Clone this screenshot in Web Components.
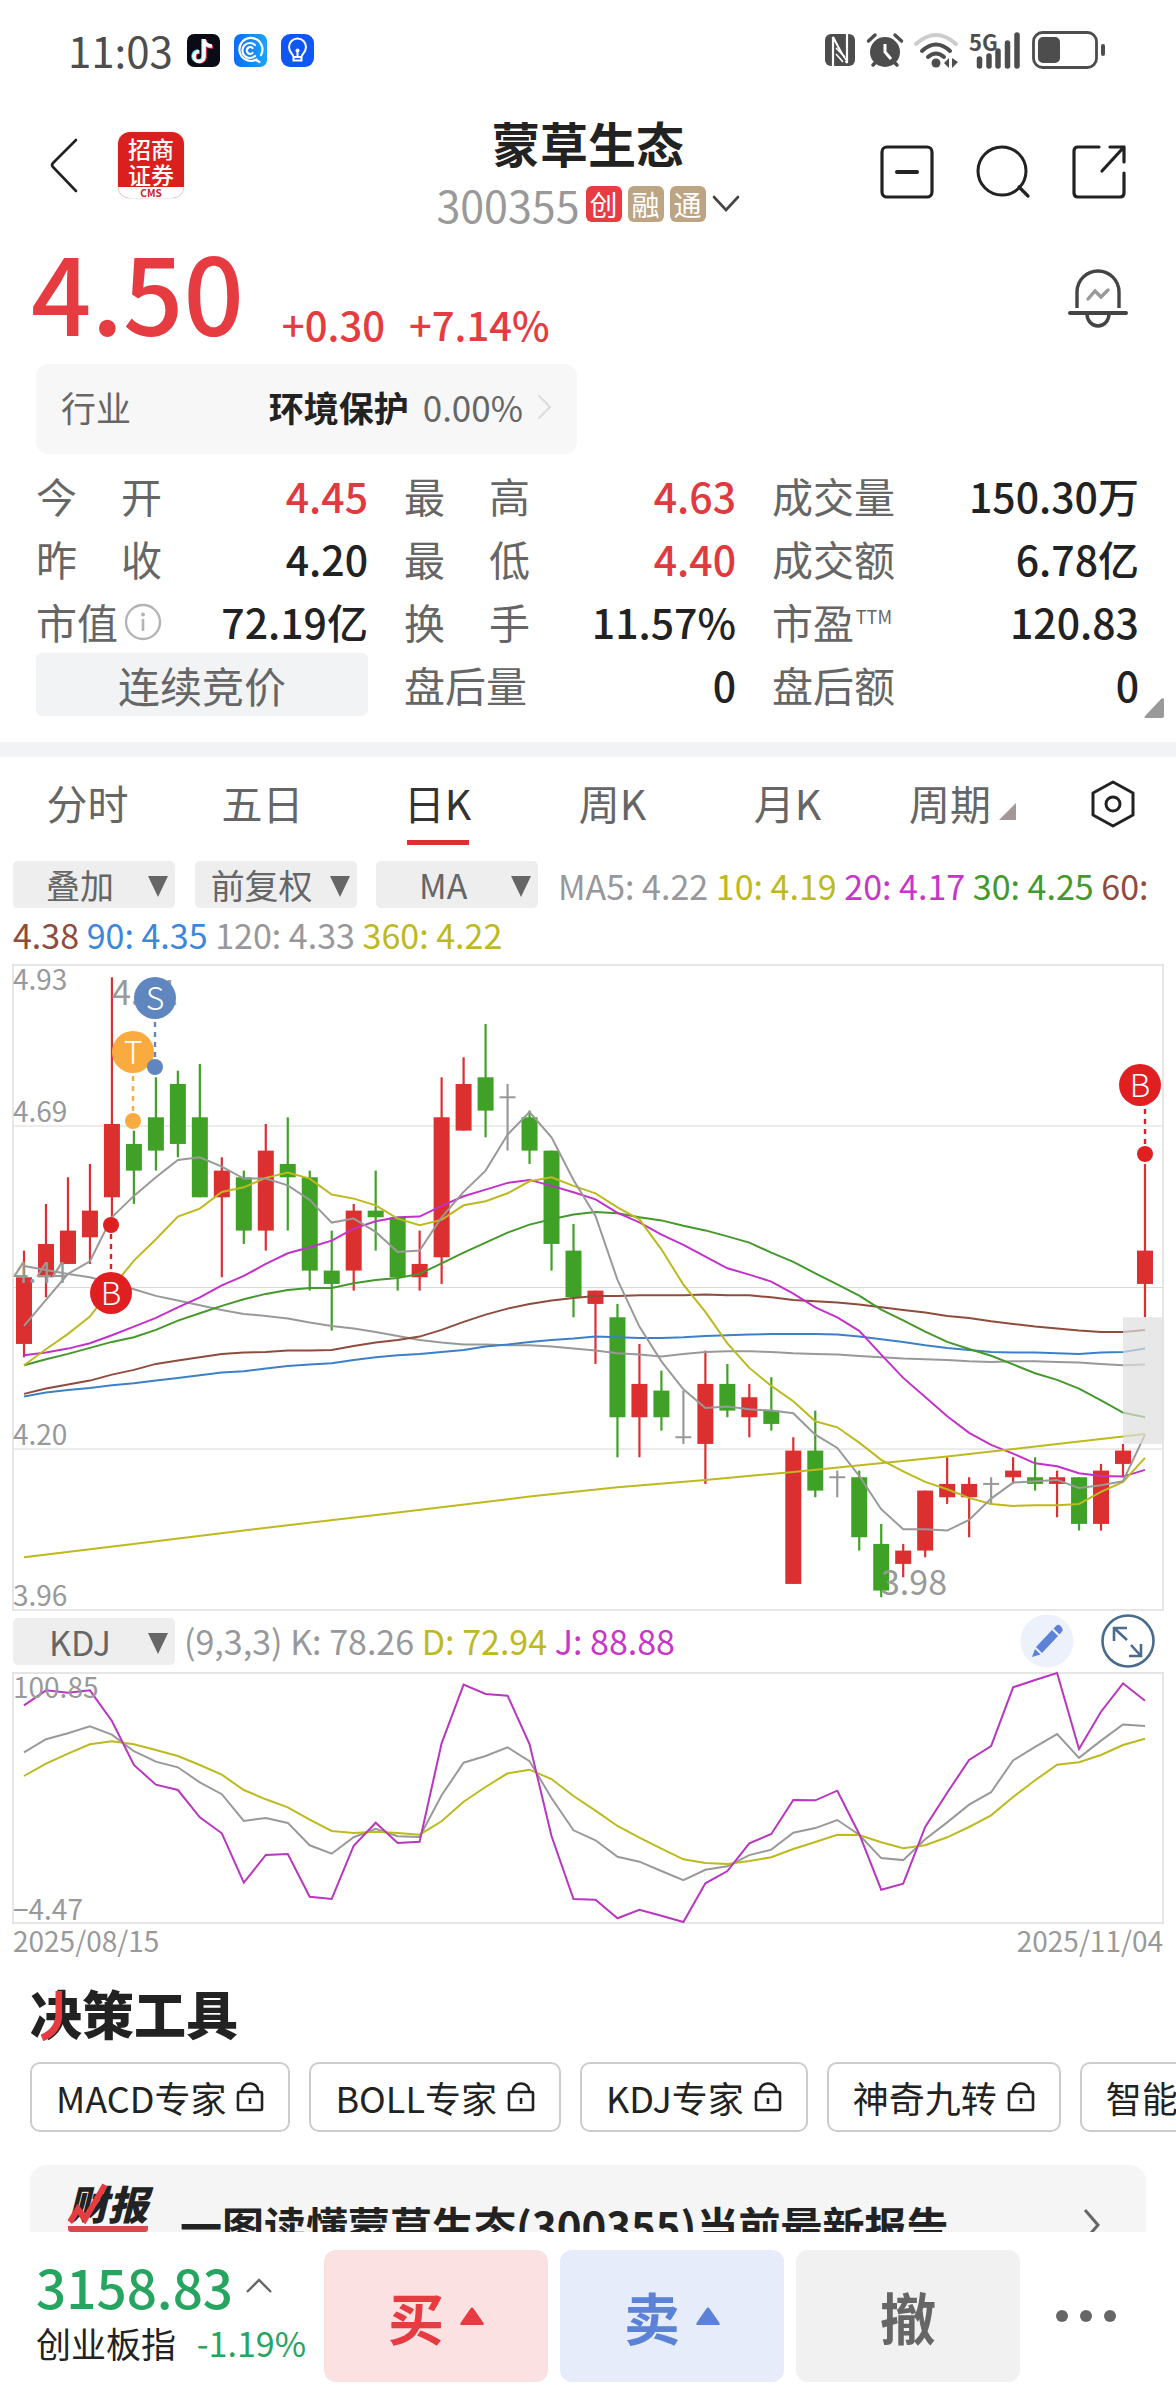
<!DOCTYPE html>
<html lang="zh-CN">
<head>
<meta charset="utf-8">
<meta name="viewport" content="width=device-width, initial-scale=1">
<title>蒙草生态 300355</title>
<style>
  html, body { margin: 0; height: 100%; background: #fff; }
  body { font-family: "Noto Sans CJK SC", "Noto Sans", sans-serif; color: #222; }
</style>
</head>
<body>
<stock-app></stock-app>
<script>
const define = (name, css, html, ready) => {
  const tpl = document.createElement('template');
  tpl.innerHTML = `<style>*{box-sizing:border-box}button,select{font:inherit;color:inherit;border:0;background:none;padding:0;margin:0}${css}</style>${html}`;
  customElements.define(name, class extends HTMLElement {
    constructor() {
      super();
      this.attachShadow({ mode: 'open' }).append(tpl.content.cloneNode(true));
    }
    connectedCallback() { if (ready) ready.call(this, this.shadowRoot); }
  });
};

/* name: [width, height, markup] */
const ICONS = {
  tiktok: [33, 33, `<rect width="33" height="33" rx="7" fill="#0b0b16"/><g fill="none" stroke-width="3.6"><path d="M16 5v17a5 5 0 1 1-5-5M16 6c1 4 4 6 8 6" stroke="#25e8e4"/><path d="M18 6v17a5 5 0 1 1-5-5M18 7c1 4 4 6 8 6" stroke="#f5345a"/><path d="M17 5v17.500a5 5 0 1 1-5-5M17 6c1 4 4 6 8 6" stroke="#fff"/></g>`],
  spiral: [33, 33, `<defs><linearGradient id="g"><stop stop-color="#0b6cf8"/><stop offset="1" stop-color="#1ba4fb"/></linearGradient></defs><rect width="33" height="33" rx="7" fill="url(#g)"/><g fill="none" stroke="#fff" stroke-width="2.200" stroke-linecap="round"><path d="M22.500 25.500A11.500 11.500 0 1 1 27 21M22 26l3.500 2"/><path d="M21 22a7.500 7.500 0 1 1 0-11"/><path d="M18.500 19a3.400 3.400 0 1 1 0-5"/></g>`],
  bulb: [33, 33, `<rect width="33" height="33" rx="9" fill="#0e57f5"/><g fill="none" stroke="#fff" stroke-width="2"><path d="M12.500 23c0-3-4.500-4.500-4.500-10a8.500 8.500 0 0 1 17 0c0 5.500-4.500 7-4.500 10zM12.500 23v3.500h8V23M16.500 23v-5"/></g><circle cx="16.500" cy="16.500" r="2" fill="#fff"/>`],
  nfc: [32, 32, `<rect x="1" width="30" height="32" rx="6" fill="#4d4d4d"/><path d="M9 32V3l14 26V0" fill="none" stroke="#fff" stroke-width="2.200"/><path d="M12.500 27V14L22 27zM12 6l8 3v12z" fill="#4d4d4d"/><path d="M12 14l9 9M12 20l7 8" stroke="#fff" stroke-width="1.600"/>`],
  alarm: [36, 34, `<circle cx="18" cy="19" r="15" fill="#4d4d4d"/><path d="M1.500 8L8 2M34.500 8L28 2M6 32l5-5M30 32l-5-5" stroke="#4d4d4d" stroke-width="3.500" stroke-linecap="round"/><path d="M18 11v8l6 7" fill="none" stroke="#fff" stroke-width="3"/>`],
  wifi: [44, 35, `<g fill="none" stroke-linecap="round" stroke-width="4"><path d="M2 11Q22-7 42 11" stroke="#ccc"/><path d="M8 18q14-13 28 0M14 24q8-7 16 0" stroke="#4d4d4d"/></g><circle cx="22" cy="30" r="4.500" fill="#4d4d4d"/><path d="M35 25v10l-5-5zM38 25v10l6-6z" fill="#4d4d4d"/>`],
  signal: [52, 35, `<path d="M10.500 26v7M20 23v10M29 18v15M38.500 10v23M48 2v31" stroke="#4d4d4d" stroke-width="5.500" stroke-linecap="round"/><text x="0" y="18" font-size="22" font-weight="700" font-family="Noto Sans CJK SC" fill="#4d4d4d">5G</text>`],
  battery: [74, 38, `<rect x="1.500" y="1.500" width="63" height="35" rx="9" fill="none" stroke="#4d4d4d" stroke-width="2.800"/><rect x="6" y="6" width="22" height="26" rx="5" fill="#4d4d4d"/><path d="M71 15v8" stroke="#4d4d4d" stroke-width="4" stroke-linecap="round"/>`],
  back: [28, 56, `<path d="M26 3L3 26q-2 2 0 4l23 24" fill="none" stroke="#222" stroke-width="2.600" stroke-linecap="round"/>`],
  minus: [54, 54, `<rect x="2" y="2" width="50" height="50" rx="5" fill="none" stroke="#222" stroke-width="3.200"/><path d="M17 27h20" stroke="#222" stroke-width="4" stroke-linecap="round"/>`],
  search: [54, 54, `<circle cx="26" cy="26" r="24" fill="none" stroke="#222" stroke-width="3"/><path d="M43 42l9 9" stroke="#222" stroke-width="3.200" stroke-linecap="round"/>`],
  share: [54, 54, `<path d="M27 2H6q-4 0-4 4v42q0 4 4 4h42q4 0 4-4V28M38 2h14v15M52 2L30 26" fill="none" stroke="#222" stroke-width="3.200" stroke-linecap="round" stroke-linejoin="round"/>`],
  bell: [60, 62, `<path d="M9 41V25a21 21 0 0 1 42 0v16M19 47a11 12 0 0 0 22 0" fill="none" stroke="#444" stroke-width="3.400"/><path d="M2 46h56" stroke="#444" stroke-width="4" stroke-linecap="round"/><path d="M20 32l7-8 6 6 7-7" fill="none" stroke="#999" stroke-width="3.400" stroke-linecap="round"/>`],
  down: [28, 18, `<path d="M2 2l12 13L26 2" fill="none" stroke="#444" stroke-width="2.600" stroke-linecap="round"/>`],
  right: [16, 26, `<path d="M2 2l11 11L2 24" fill="none" stroke="#ddd" stroke-width="2.200" stroke-linecap="round"/>`],
  next: [20, 36, `<path d="M3 3l13 15L3 33" fill="none" stroke="#666" stroke-width="3"/>`],
  up: [28, 18, `<path d="M2 15L14 3l12 12" fill="none" stroke="#666" stroke-width="2.400"/>`],
  info: [38, 38, `<circle cx="19" cy="19" r="17" fill="none" stroke="#b4b4b4" stroke-width="2.400"/><circle cx="19" cy="11.500" r="2" fill="#b4b4b4"/><path d="M19 16v12" stroke="#b4b4b4" stroke-width="2.600"/>`],
  corner: [20, 20, `<path d="M20 1v17q0 2-2 2H1q-1-1 0-2L18 0z" fill="#999"/>`],
  tabcorner: [17, 17, `<path d="M17 0v17H0z" fill="#a39797"/>`],
  hex: [46, 48, `<path d="M23 2l20 11v22L23 46 3 35V13z" fill="none" stroke="#222" stroke-width="3" stroke-linejoin="round"/><circle cx="23" cy="24" r="7" fill="none" stroke="#222" stroke-width="3"/>`],
  pencil: [54, 54, `<circle cx="27" cy="27" r="26.500" fill="#ecf1fb"/><g fill="#5b82d6"><path d="M32 16l6 6-16 17-6-6z"/><path d="M33.500 14.500l3-3q2-1.500 4 .5l1.500 2q1.500 2 0 3.500l-2.500 3z"/><path d="M15 35l5.500 5.500L12 43z"/></g>`],
  expand: [54, 54, `<g fill="none" stroke="#4a6b8c" stroke-width="2.600"><circle cx="27" cy="27" r="25.500"/><path d="M26 14H13v13M13 14l13 12M40 30v12H28M40 42L30 31"/></g>`],
  lock: [28, 30, `<rect x="2" y="10" width="24" height="18" rx="1" fill="none" stroke="#222" stroke-width="2.600"/><path d="M6 10V8a8 6.500 0 0 1 16 0v2M14 16v6" fill="none" stroke="#222" stroke-width="2.600"/>`],
  tri: [24, 18, `<path d="M10.500 1.500q1.500-2 3 0L23.500 16q1 2-1.500 2H2q-2.500 0-1.500-2z" fill="currentColor"/>`],
  more: [62, 14, `<g fill="#666"><circle cx="7" cy="7" r="6"/><circle cx="31" cy="7" r="6"/><circle cx="55" cy="7" r="6"/></g>`]
};

define('ui-icon', `:host{display:inline-flex;flex:none}svg{display:block;overflow:visible}`, ``, function (root) {
  const [w, h, body] = ICONS[this.getAttribute('name')];
  const box = document.createElement('div');
  box.innerHTML = `<svg width="${w}" height="${h}" viewBox="0 0 ${w} ${h}" aria-hidden="true">${body}</svg>`;
  root.append(box.firstChild);
});

define('status-bar', `
  :host{display:flex;justify-content:space-between;align-items:center;padding:20px 70px 20px 68px;color:#4d4d4d;font-size:42px;line-height:60px}
  div{display:flex;align-items:center;gap:14px}
  .sys{gap:11px}`,
  `<div class="apps"><time>11:03</time><ui-icon name="tiktok"></ui-icon><ui-icon name="spiral"></ui-icon><ui-icon name="bulb"></ui-icon></div>
   <div class="sys"><ui-icon name="nfc"></ui-icon><ui-icon name="alarm"></ui-icon><ui-icon name="wifi"></ui-icon><ui-icon name="signal"></ui-icon><ui-icon name="battery"></ui-icon></div>`);

define('broker-logo', `
  :host{display:block;width:66px;border-radius:12px;overflow:hidden;background:#d9201f;color:#fff;text-align:center;box-shadow:0 0 0 1px #eee;padding-top:3px;font:500 23px/26px "Noto Sans CJK SC",sans-serif}
  span{display:block}
  small{display:block;background:#fff;color:#c22;font-size:10px;line-height:11px;font-weight:700}`,
  `<span>招商</span><span>证券</span><small>CMS</small>`);

define('stock-header', `
  :host{display:grid;grid-template-columns:1fr auto 1fr;align-items:center;padding:12px 50px 0 50px}
  .left,.right,.code,button{display:flex;align-items:center}
  .left{gap:40px;padding-bottom:8px}
  .right{gap:42px;justify-content:flex-end;padding-top:6px}
  .mid{text-align:center}
  h1{margin:0;font-size:48px;line-height:60px;font-weight:700}
  .code{margin-top:10px;font-size:43px;line-height:44px;color:#999;gap:6px;justify-content:center}
  b{width:36px;border-radius:6px;background:#bda583;color:#fff;font-size:28px;line-height:36px;font-weight:400}
  b.hot{background:#e63c42}`,
  `<div class="left"><button aria-label="返回"><ui-icon name="back"></ui-icon></button><broker-logo></broker-logo></div>
   <div class="mid"><h1>蒙草生态</h1><div class="code"><span>300355</span><b class="hot">创</b><b>融</b><b>通</b><ui-icon name="down"></ui-icon></div></div>
   <div class="right"><button aria-label="删自选"><ui-icon name="minus"></ui-icon></button><button aria-label="搜索"><ui-icon name="search"></ui-icon></button><button aria-label="分享"><ui-icon name="share"></ui-icon></button></div>`);

define('price-line', `
  :host{display:flex;align-items:flex-end;padding:9px 48px 0 31px;color:#e63b40;font-weight:500}
  .now{font-size:106px;line-height:110px}
  .chg{font-size:40px;line-height:42px;display:flex;gap:24px;margin-left:38px;flex:1}
  button{display:flex;align-self:center;padding-top:16px}`,
  `<div class="now">4.50</div><div class="chg"><span>+0.30</span><span>+7.14%</span></div><button aria-label="提醒"><ui-icon name="bell"></ui-icon></button>`);

define('industry-card', `
  :host{display:block;padding:19px 36px 0}
  a{display:flex;align-items:center;width:49%;padding:0 24px 4px 25px;border-radius:12px;background:#f7f7f7;color:#666;font-size:35px;line-height:86px;text-decoration:none}
  strong{color:#222;margin:0 14px 0 auto}
  ui-icon{margin-left:14px}`,
  `<a href="#industry"><span>行业</span><strong>环境保护</strong><span>0.00%</span><ui-icon name="right"></ui-icon></a>`);

define('quote-cell', `
  :host{display:flex;align-items:center;justify-content:space-between;font-size:41px;line-height:63px}
  .k{display:flex;justify-content:space-between;align-items:center;width:126px;color:#666}
  .v{font-weight:500;color:#222}
  :host([up]) .v{color:#e0393e}`,
  `<span class="k"></span><span class="v"><slot></slot></span>`,
  function (root) {
    const k = root.querySelector('.k'), label = this.getAttribute('label');
    const parts = label.length === 2 && !this.hasAttribute('mark') ? [...label] : [label];
    k.replaceChildren(...parts.map(t => Object.assign(document.createElement('span'), { textContent: t })));
    if (this.getAttribute('mark') === 'info') k.insertAdjacentHTML('beforeend', '<ui-icon name="info"></ui-icon>');
    if (this.getAttribute('mark') === 'ttm') k.insertAdjacentHTML('beforeend', '<span style="font-size:18px;line-height:20px;padding:0 6px 12px 0">TTM</span>');
  });

define('quote-grid', `
  :host{display:grid;position:relative;grid-template-columns:332fr 332fr 367fr;column-gap:36px;padding:10px 37px 26px 36px}
  button{border-radius:6px;background:#f2f3f5;color:#666;font-size:42px;line-height:60px}
  .fold{position:absolute;right:12px;bottom:24px}`,
  `<quote-cell label="今开" up>4.45</quote-cell><quote-cell label="最高" up>4.63</quote-cell><quote-cell label="成交量">150.30万</quote-cell>
   <quote-cell label="昨收">4.20</quote-cell><quote-cell label="最低" up>4.40</quote-cell><quote-cell label="成交额">6.78亿</quote-cell>
   <quote-cell label="市值" mark="info">72.19亿</quote-cell><quote-cell label="换手">11.57%</quote-cell><quote-cell label="市盈" mark="ttm">120.83</quote-cell>
   <button>连续竞价</button><quote-cell label="盘后量">0</quote-cell><quote-cell label="盘后额">0</quote-cell>
   <ui-icon class="fold" name="corner"></ui-icon>`);

define('period-tabs', `
  :host{display:grid;grid-template-columns:repeat(6,175fr) 126fr;border-top:15px solid #f2f3f5;padding-bottom:16px;color:#666;font-size:41px;line-height:60px}
  button{display:flex;flex-direction:column;align-items:center;padding-top:15px}
  button::after{content:"";width:62px;height:5px;margin-top:8px}
  .on{color:#333}
  .on::after{background:#dc2f30}
  .more span{display:flex;align-items:center;gap:8px}
  .more ui-icon{padding-top:18px}
  .set{padding-top:23px}
  .set::after{display:none}`,
  `<button>分时</button><button>五日</button><button class="on">日K</button><button>周K</button><button>月K</button>
   <button class="more"><span>周期<ui-icon name="tabcorner"></ui-icon></span></button><button class="set" aria-label="设置"><ui-icon name="hex"></ui-icon></button>`);

define('pick-list', `
  :host{display:inline-block;position:relative;width:162px;color:#666;font-size:34px;vertical-align:top}
  select{display:block;appearance:none;width:100%;height:47px;line-height:47px;padding-right:28px;border-radius:5px;background:#eee;text-align-last:center}
  i{position:absolute;right:7px;top:15px;border:10px solid transparent;border-top:21px solid #666;border-bottom:0;pointer-events:none}`,
  `<select><option></option></select><i></i>`,
  function (root) {
    root.querySelector('option').textContent = this.getAttribute('value');
    root.querySelector('select').setAttribute('aria-label', this.getAttribute('value'));
  });

define('ma-legend', `
  :host{display:block;padding:0 13px 5px;font-size:34px;line-height:49px}
  pick-list{margin-right:12px}`,
  `<pick-list value="叠加"></pick-list> <pick-list value="前复权"></pick-list> <pick-list value="MA"></pick-list> <span style="color:#98989c">MA5: 4.22</span> <span style="color:#bdb91f">10: 4.19</span> <span style="color:#c836c8">20: 4.17</span> <span style="color:#44982c">30: 4.25</span> <span style="color:#8f4c3c">60: 4.38</span> <span style="color:#3c87dc">90: 4.35</span> <span style="color:#98989c">120: 4.33</span> <span style="color:#bdb91f">360: 4.22</span>`);

/* Candles: colour, high, body top, body bottom, low */
const CANDLES = `R 4.50 4.46 4.36 4.34|R 4.57 4.51 4.46 4.43|R 4.61 4.53 4.48 4.48|R 4.63 4.56 4.52 4.48|R 4.91 4.69 4.58 4.54|G 4.68 4.66 4.62 4.57|G 4.76 4.70 4.65 4.62|G 4.77 4.75 4.66 4.64|G 4.78 4.70 4.58 4.58|R 4.64 4.62 4.58 4.46|G 4.62 4.61 4.53 4.51|R 4.69 4.65 4.53 4.50|G 4.70 4.63 4.61 4.53|G 4.62 4.61 4.47 4.44|G 4.53 4.47 4.45 4.38|R 4.57 4.56 4.47 4.44|G 4.62 4.56 4.55 4.50|G 4.55 4.55 4.46 4.44|R 4.53 4.48 4.46 4.44|R 4.76 4.70 4.49 4.45|R 4.79 4.75 4.68 4.68|G 4.84 4.76 4.71 4.67|D 4.75 4.73 4.73 4.65|G 4.71 4.70 4.65 4.63|G 4.65 4.65 4.51 4.47|G 4.54 4.50 4.43 4.40|R 4.44 4.44 4.42 4.33|G 4.42 4.40 4.25 4.19|R 4.36 4.30 4.25 4.19|G 4.32 4.29 4.25 4.23|D 4.29 4.22 4.22 4.21|R 4.35 4.30 4.21 4.15|G 4.33 4.30 4.26 4.25|R 4.30 4.28 4.25 4.22|G 4.31 4.26 4.24 4.23|R 4.22 4.20 4.00 4.00|G 4.26 4.20 4.14 4.13|D 4.17 4.16 4.16 4.13|G 4.17 4.16 4.07 4.05|G 4.09 4.06 3.99 3.98|R 4.06 4.05 4.03 4.01|R 4.14 4.14 4.05 4.04|R 4.19 4.15 4.13 4.12|R 4.16 4.15 4.13 4.07|D 4.16 4.15 4.15 4.12|R 4.19 4.17 4.16 4.15|G 4.19 4.16 4.15 4.14|R 4.17 4.16 4.15 4.10|G 4.16 4.16 4.09 4.08|R 4.18 4.17 4.09 4.08|R 4.21 4.20 4.18 4.16|R 4.63 4.50 4.45 4.40`
  .split('|').map(s => { const [c, ...n] = s.split(' '); return [c, ...n.map(Number)]; });
const CLOSES = CANDLES.map(([c, , top, bottom]) => c === 'G' ? bottom : top);
const movingAverage = (n, lead) => CLOSES.map((_, i) =>
  i < lead.length ? lead[i] : CLOSES.slice(i - n + 1, i + 1).reduce((a, b) => a + b) / n);
const MA5 = movingAverage(5, [4.387, 4.426, 4.465, 4.484]);
const MA10 = movingAverage(10, [4.328, 4.352, 4.375, 4.401, 4.444, 4.485, 4.517, 4.551, 4.563]);
const MA20 = movingAverage(20, [4.343, 4.347, 4.353, 4.361, 4.373, 4.386, 4.399, 4.415, 4.430, 4.448, 4.462, 4.48, 4.496, 4.505, 4.515, 4.533, 4.544, 4.55, 4.551]);
const MA30 = movingAverage(30, [4.328, 4.337, 4.345, 4.354, 4.363, 4.37, 4.381, 4.395, 4.406, 4.417, 4.427, 4.435, 4.441, 4.444, 4.444, 4.451, 4.456, 4.459, 4.465, 4.481, 4.497, 4.512, 4.527, 4.539, 4.547, 4.554, 4.558, 4.556, 4.55]);
const MA60 = [4.285, 4.293, 4.299, 4.305, 4.314, 4.321, 4.33, 4.335, 4.34, 4.345, 4.347, 4.348, 4.35, 4.35, 4.351, 4.357, 4.362, 4.366, 4.371, 4.381, 4.393, 4.404, 4.413, 4.42, 4.425, 4.429, 4.432, 4.432, 4.433, 4.433, 4.433, 4.434, 4.433, 4.433, 4.43, 4.426, 4.424, 4.422, 4.419, 4.415, 4.411, 4.407, 4.402, 4.399, 4.394, 4.39, 4.386, 4.383, 4.38, 4.378, 4.378, 4.381];
const MA90 = [4.281, 4.287, 4.291, 4.294, 4.298, 4.301, 4.305, 4.309, 4.313, 4.317, 4.319, 4.323, 4.327, 4.329, 4.331, 4.336, 4.34, 4.343, 4.345, 4.348, 4.351, 4.356, 4.359, 4.363, 4.366, 4.368, 4.371, 4.37, 4.369, 4.369, 4.37, 4.372, 4.373, 4.374, 4.375, 4.375, 4.375, 4.374, 4.371, 4.367, 4.363, 4.358, 4.354, 4.351, 4.348, 4.347, 4.347, 4.346, 4.345, 4.347, 4.348, 4.353];
const MA120 = [4.477, 4.471, 4.465, 4.46, 4.451, 4.442, 4.432, 4.425, 4.418, 4.411, 4.405, 4.402, 4.398, 4.392, 4.387, 4.383, 4.378, 4.372, 4.366, 4.362, 4.359, 4.359, 4.358, 4.358, 4.356, 4.353, 4.35, 4.346, 4.344, 4.341, 4.345, 4.348, 4.349, 4.349, 4.348, 4.346, 4.345, 4.344, 4.342, 4.34, 4.338, 4.337, 4.336, 4.334, 4.333, 4.334, 4.334, 4.333, 4.332, 4.33, 4.328, 4.329];
const MA360 = [[0, 4.04], [6, 4.064], [12, 4.088], [17, 4.107], [23, 4.131], [27, 4.145], [31, 4.156], [35, 4.168], [42, 4.191], [47, 4.21], [51, 4.225]];

const X = i => 24 + i * 21.98;
const Y = p => 977.3 + (4.91 - p) * 666.6;
const path = (pts, color) => `<polyline points="${pts.map(([x, y]) => x.toFixed(1) + ',' + y.toFixed(1)).join(' ')}" fill="none" stroke="${color}" stroke-width="2"/>`;
const line = (data, color) => path(data.map((v, i) => [X(i), Y(v)]), color);
const COLORS = { R: '#dc2f30', G: '#3fa226', D: '#999' };

const candle = ([c, high, top, bottom, low], i) => {
  const x = X(i), col = COLORS[c];
  const body = c === 'D'
    ? `<path d="M${x - 8} ${Y(top)}h16" stroke="${col}" stroke-width="2"/>`
    : `<rect x="${x - 8}" y="${Y(top)}" width="16" height="${Y(bottom) - Y(top)}" fill="${col}"/>`;
  return `<path d="M${x} ${Y(high)}V${Y(low)}" stroke="${col}" stroke-width="2.200"/>` + body;
};
const marker = (letter, color, cx, cy, dx, dy) => `
  <path d="M${dx} ${cy + (dy > cy ? 24 : -24)}V${dy}" stroke="${color}" stroke-width="2.400" stroke-dasharray="5 5"/>
  <circle cx="${dx}" cy="${dy}" r="8" fill="${color}"/><circle cx="${cx}" cy="${cy}" r="21" fill="${color}"/>
  <text x="${cx}" y="${cy + 12}" font-size="32" font-weight="300" fill="#fff" text-anchor="middle">${letter}</text>`;

define('candle-chart', `:host{display:block}svg{display:block;width:100%;overflow:visible}text{font-family:"Noto Sans CJK SC",sans-serif}`,
  `<svg viewBox="0 964 1176 647" role="img" aria-label="日K线">
    <path d="M13 1126h1150M13 1287.500h1150M13 1449h1150" stroke="#d9d9d9" stroke-width="1.200"/>
    <rect x="13" y="965" width="1150" height="645" fill="none" stroke="#e6e6e6" stroke-width="2"/>
    ${CANDLES.map(candle).join('')}
    ${line(MA120, '#999')}${line(MA90, '#3c80c8')}${line(MA60, '#8f4c3c')}${line(MA30, '#44982c')}${line(MA20, '#c232c8')}${line(MA10, '#bdb91f')}${line(MA5, '#999')}
    ${path(MA360.map(([i, v]) => [X(i), Y(v)]), '#bdb91f')}
    <rect x="1123" y="${Y(4.40)}" width="40" height="${Y(4.21) - Y(4.40)}" fill="#dedede" fill-opacity=".7"/>
    <g font-size="28" fill="#999"><text x="13" y="990">4.93</text><text x="13" y="1122">4.69</text><text x="13" y="1283">4.44</text><text x="13" y="1445">4.20</text><text x="13" y="1606">3.96</text></g>
    <g font-size="34" fill="#999"><text x="112" y="1005">4.91</text><text x="881" y="1595">3.98</text></g>
    ${marker('T', '#f9ab40', 133, 1052, 133, 1121)}${marker('S', '#5f86bf', 155, 998, 155, 1067)}${marker('B', '#e02020', 111, 1293, 111, 1225)}${marker('B', '#e02020', 1140, 1085, 1145, 1154)}
  </svg>`);

/* KDJ series in thirds of a unit, measured down from the axis maximum */
const AXIS_MAX = 279;
const J = [376, 331, 338, 331, 423, 555, 614, 630, 712, 760, 908, 825, 822, 950, 957, 797, 728, 789, 785, 490, 314, 342, 347, 492, 768, 957, 959, 1015, 989, 1007, 1026, 910, 873, 790, 762, 660, 661, 632, 762, 929, 911, 741, 638, 540, 498, 322, 300, 279, 507, 395, 310, 362];
const D = [588, 551, 521, 493, 484, 493, 510, 528, 555, 584, 630, 658, 682, 719, 753, 759, 755, 759, 764, 724, 665, 621, 580, 569, 597, 648, 692, 738, 773, 806, 838, 849, 852, 843, 832, 807, 786, 764, 765, 787, 805, 796, 772, 741, 706, 651, 601, 554, 547, 525, 495, 476];
const K = J.map((j, i) => (j + 2 * D[i]) / 3);
const kdj = (data, color) => path(data.map((v, i) => [X(i), 1673 + (v - AXIS_MAX) / 3]), color);

define('kdj-panel', `
  :host{display:block}
  .bar{display:flex;align-items:center;gap:9px;padding:3px 21px 4px 13px;font-size:34px;line-height:54px;color:#98989c}
  p{margin:0;flex:1}
  .d{color:#bdb91f}.j{color:#c836c8}
  button{display:flex}
  button+button{margin-left:18px}
  svg{display:block;width:100%;overflow:visible}
  text{font-family:"Noto Sans CJK SC",sans-serif}
  .dates{display:flex;justify-content:space-between;padding:0 13px;color:#999;font-size:28px;line-height:32px}`,
  `<div class="bar"><pick-list value="KDJ"></pick-list><p>(9,3,3) <span>K: 78.26</span> <span class="d">D: 72.94</span> <span class="j">J: 88.88</span></p>
    <button aria-label="画线"><ui-icon name="pencil"></ui-icon></button><button aria-label="全屏"><ui-icon name="expand"></ui-icon></button></div>
   <svg viewBox="0 1672 1176 252" role="img" aria-label="KDJ">
     <rect x="13" y="1673" width="1150" height="250" fill="none" stroke="#e6e6e6" stroke-width="2"/>
     ${kdj(K, '#999')}${kdj(D, '#bdb91f')}${kdj(J, '#b836c0')}
     <g font-size="28" fill="#999"><text x="13" y="1698">100.85</text><text x="13" y="1920">−4.47</text></g>
   </svg>
   <div class="dates"><time>2025/08/15</time><time>2025/11/04</time></div>`);

define('tool-chip', `
  :host{flex:none;display:block}
  button{display:flex;align-items:center;gap:10px;padding:0 24px;border:2px solid #ccc;border-radius:10px;font-size:36px;line-height:66px;white-space:nowrap}`,
  `<button><span><slot></slot></span><ui-icon name="lock"></ui-icon></button>`);

define('decision-tools', `
  :host{display:block;padding-top:27px}
  h2{position:relative;width:max-content;margin:0 0 19px 30px;font-size:52px;line-height:60px;font-weight:900}
  h2 svg{position:absolute;left:8px;top:8px}
  .row{display:flex;gap:19px;padding-left:30px;overflow:hidden}`,
  `<h2>决策工具<svg width="24" height="50" viewBox="0 0 24 50" aria-hidden="true"><path d="M21 0v22q0 18-17 25" fill="none" stroke="#e63b40" stroke-width="7"/></svg></h2>
   <div class="row"><tool-chip>MACD专家</tool-chip><tool-chip>BOLL专家</tool-chip><tool-chip>KDJ专家</tool-chip><tool-chip>神奇九转</tool-chip><tool-chip>智能盯盘</tool-chip></div>`);

define('report-card', `
  :host{display:block;margin:33px 30px 0}
  a{display:flex;align-items:center;padding:16px 44px 16px 38px;border-radius:16px;background:#f5f5f5;color:#222;text-decoration:none;font-size:42px;line-height:88px;font-weight:700}
  .tag{position:relative;align-self:flex-start;border-bottom:6px solid #d9484b;margin-right:32px;font-size:40px;line-height:45px;font-style:italic;font-weight:900;border-radius:3px}
  .tag svg{position:absolute;left:0;top:0}
  .t{flex:1}`,
  `<a href="#report"><span class="tag">财报<svg width="44" height="45" viewBox="0 0 44 45" aria-hidden="true"><path d="M2 41l8-13 7 10L37 4" fill="none" stroke="#e63b40" stroke-width="6"/></svg></span><span class="t">一图读懂蒙草生态(300355)当前最新报告</span><ui-icon name="next"></ui-icon></a>`);

define('trade-bar', `
  :host{display:grid;grid-template-columns:276px repeat(3,1fr) 132px;gap:12px;padding:18px 12px 18px 36px;background:#fff}
  .idx{line-height:40px}
  .top{display:flex;align-items:center;gap:12px;font-size:53px;line-height:72px;color:#25a55f;font-weight:500}
  .sub{display:flex;justify-content:space-between;padding-right:6px;font-size:35px;line-height:42px}
  .sub em{font-style:normal;font-size:34px;color:#25a55f}
  button{display:flex;align-items:center;justify-content:center;gap:16px;border-radius:12px;font-size:56px;line-height:132px;font-weight:700}
  .buy{background:#fce1e2;color:#e63b40}
  .sell{background:#e6ecf9;color:#5b82d6}
  .cancel{background:#f1f1f1;color:#666}
  .menu{padding-right:24px}`,
  `<div class="idx"><div class="top"><span>3158.83</span><ui-icon name="up"></ui-icon></div><div class="sub"><span>创业板指</span><em>-1.19%</em></div></div>
   <button class="buy">买<ui-icon name="tri"></ui-icon></button><button class="sell">卖<ui-icon name="tri"></ui-icon></button><button class="cancel">撤</button>
   <button class="menu" aria-label="更多"><ui-icon name="more"></ui-icon></button>`);

define('stock-app', `
  :host{display:flex;flex-direction:column;height:100vh;overflow:hidden}
  main{flex:1;min-height:0;overflow:hidden}
  trade-bar{flex:none}`,
  `<main><status-bar></status-bar><stock-header></stock-header><price-line></price-line><industry-card></industry-card><quote-grid></quote-grid>
   <period-tabs></period-tabs><ma-legend></ma-legend><candle-chart></candle-chart><kdj-panel></kdj-panel><decision-tools></decision-tools><report-card></report-card></main>
   <trade-bar></trade-bar>`);
</script>
</body>
</html>
